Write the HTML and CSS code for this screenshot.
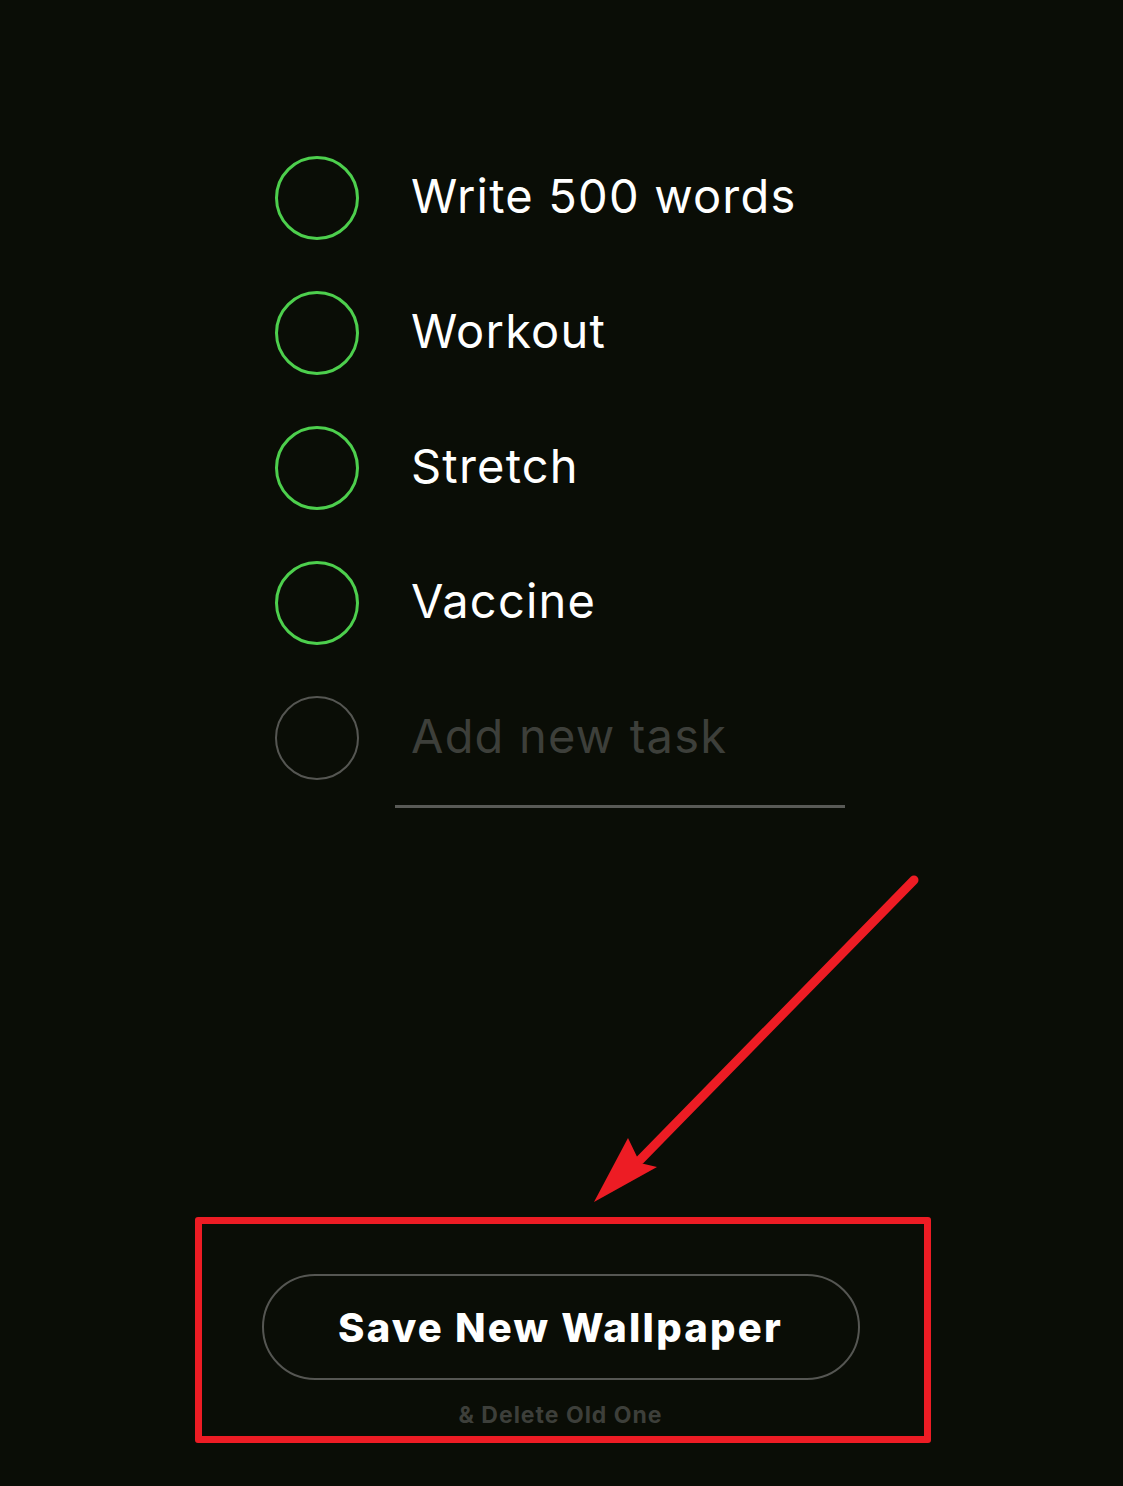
FILE: index.html
```html
<!DOCTYPE html>
<html>
<head>
<meta charset="utf-8">
<link rel="stylesheet" href="styles.css">
</head>
<body>
<div class="screen">
  <ul class="tasks">
    <li class="task"><span class="check"></span><span class="label">Write 500 words</span></li>
    <li class="task"><span class="check"></span><span class="label">Workout</span></li>
    <li class="task"><span class="check"></span><span class="label">Stretch</span></li>
    <li class="task"><span class="check"></span><span class="label">Vaccine</span></li>
    <li class="task new"><span class="check"></span><span class="input">Add new task</span></li>
  </ul>
  <div class="highlight">
    <button class="save">Save New Wallpaper</button>
    <div class="sub">&amp; Delete Old One</div>
  </div>
  <svg class="arrow" width="1123" height="1486" viewBox="0 0 1123 1486">
    <line x1="914" y1="880" x2="640" y2="1160" stroke="#ed1c24" stroke-width="9" stroke-linecap="round"/>
    <polygon points="594,1202 628,1138 640,1163 657,1167" fill="#ed1c24"/>
  </svg>
</div>
</body>
</html>
```
FILE: styles.css
```css
html, body {
  margin: 0;
  padding: 0;
  background: #0a0d06;
}
.screen {
  position: relative;
  width: 1123px;
  height: 1486px;
  font-family: "Inter", "Noto Sans", sans-serif;
  color: #fff;
  overflow: hidden;
}
.tasks {
  list-style: none;
  margin: 0;
  padding: 130px 0 0 275px;
}
.task {
  height: 135px;
  display: flex;
  align-items: center;
  gap: 52px;
}
.check {
  width: 78px;
  height: 78px;
  border: 3px solid #4dcf4d;
  border-radius: 50%;
  flex: none;
}
.label {
  font-size: 47px;
  font-weight: 400;
  letter-spacing: 1.2px;
  position: relative;
  top: -2px;
}
.task.new .check {
  border-color: #555652;
  border-width: 2px;
  width: 80px;
  height: 80px;
}
.task.new {
  position: relative;
}
.input {
  font-size: 47px;
  color: #3d3f3a;
  letter-spacing: 1.2px;
  position: relative;
  top: -2px;
}
.task.new::after {
  content: "";
  position: absolute;
  left: 120px;
  top: 135px;
  width: 450px;
  height: 3px;
  background: #595a56;
}
.highlight {
  margin: 412px 0 0 195px;
  width: 722px;
  height: 212px;
  border: 7px solid #ed1c24;
  border-radius: 3px;
  display: flex;
  flex-direction: column;
  align-items: center;
}
.save {
  margin: 50px 0 0 -5px;
  width: 598px;
  height: 106px;
  border: 2px solid #555652;
  border-radius: 53px;
  background: transparent;
  color: #fff;
  font-family: "Inter", "Noto Sans", sans-serif;
  font-weight: 800;
  font-size: 40px;
  letter-spacing: 2.2px;
  padding: 0;
}
.sub {
  margin: 21px 0 0 -5px;
  font-size: 23px;
  font-weight: 700;
  letter-spacing: 1px;
  color: #3d3f3a;
}
.arrow {
  position: absolute;
  left: 0;
  top: 0;
  pointer-events: none;
}
```
